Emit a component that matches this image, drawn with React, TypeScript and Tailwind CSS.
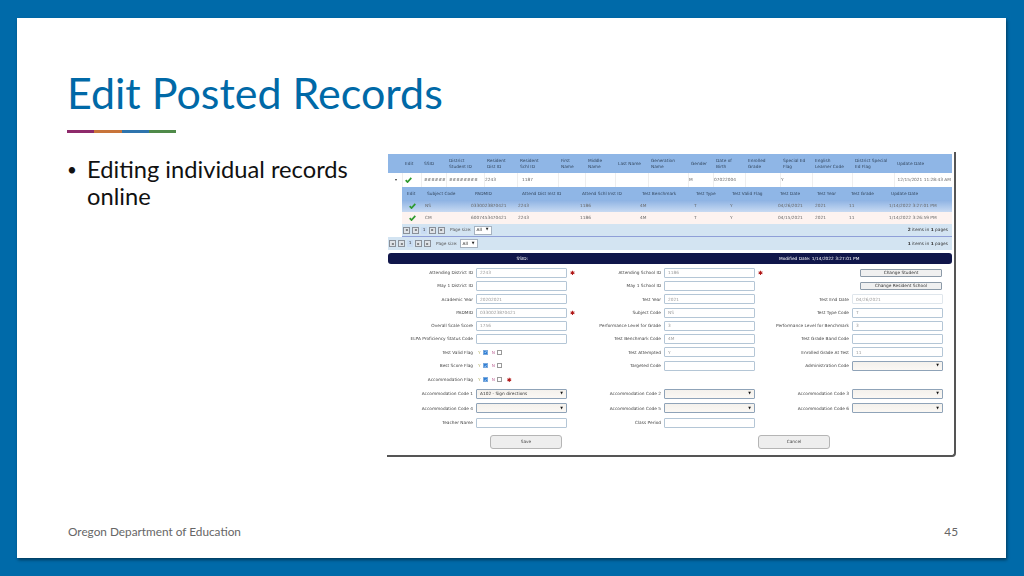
const OUTER = "grid grid-cols-[15px_19px_25px_38px_33px_41px_27px_30px_33px_40px_25px_32px_35px_32px_40px_42px_58px]";
const INNER = "grid grid-cols-[21px_46px_47px_62px_60px_54px_36px_48px_37px_34px_40px_66px]";

const outerHead = ["", "Edit", "SSID", "District\nStudent ID", "Resident\nDist ID", "Resident\nSchl ID", "First\nName", "Middle\nName", "Last Name", "Generation\nName", "Gender", "Date of\nBirth", "Enrolled\nGrade", "Special Ed\nFlag", "English\nLearner Code", "District Special\nEd Flag", "Update Date"];
const outerRow = ["", "", "######", "########", "2243", "1187", "", "", "", "", "M", "07022004", "", "Y", "", "", "12/15/2021 11:28:43 AM"];
const innerHead = ["Edit", "Subject Code", "PADMID", "Attend Dist Inst ID", "Attend Schl Inst ID", "Test Benchmark", "Test Type", "Test Valid Flag", "Test Date", "Test Year", "Test Grade", "Update Date"];
const innerRows = [
  ["", "NS", "0330023870421", "2243", "1186", "4M", "T", "Y", "04/26/2021", "2021", "11", "1/14/2022 3:27:01 PM"],
  ["", "CM", "6007453470421", "2243", "1186", "4M", "T", "Y", "04/15/2021", "2021", "11", "1/14/2022 3:26:59 PM"],
];

function Check() {
  return (
    <svg viewBox="0 0 10 8" className="w-[7px] h-[6px]">
      <path d="M1 4.2 L3.6 7 L9 1" fill="none" stroke="#2e9a2e" strokeWidth="2.4" />
    </svg>
  );
}

function Pager({ right, label }: { right: React.ReactNode; label: string }) {
  const btn = "w-[7px] h-[7px] bg-[#dfe3e8] border border-[#8a9099] flex items-center justify-center text-[4px] leading-none text-[#222]";
  return (
    <div className="flex items-center h-full pl-[1px] pr-[4px]">
      <div className="flex items-center gap-[2px]">
        <span className={btn}>◂</span>
        <span className={btn}>◂</span>
        <span className="w-[6px] h-[7px] bg-[#c9dcf3] text-center text-[#333]">1</span>
        <span className={btn}>▸</span>
        <span className={btn}>▸</span>
      </div>
      <span className="ml-[5px] text-[#555]">{label}</span>
      <span className="ml-[2px] w-[18px] h-[9px] bg-white border border-[#a6b2bf] flex items-center justify-between px-[2px] text-[#222]">
        All <span className="text-[3.5px]">▼</span>
      </span>
      <span className="ml-auto text-[#333]">{right}</span>
    </div>
  );
}

function Star() {
  return <span className="ml-[3px] text-[#b01515] text-[6px] leading-none font-bold">✱</span>;
}

function Input({ v, star, faint }: { v?: string; star?: boolean; faint?: boolean }) {
  return (
    <>
      <span className={`w-[91px] h-[10px] bg-white border rounded-[1px] pl-[3px] flex items-center text-[#9a9a9a] ${faint ? "border-[#dfe6ec]" : "border-[#b4c6d6]"}`}>
        {v}
      </span>
      {star && <Star />}
    </>
  );
}

function Select({ v }: { v?: string }) {
  return (
    <span className="w-[91px] h-[10px] bg-gradient-to-b from-[#f4f1ec] to-[#fbf8f4] border border-[#8fa3b8] rounded-[1px] pl-[3px] pr-[3px] flex items-center justify-between text-[#333]">
      <span>{v}</span>
      <span className="text-[3.5px] text-[#111]">▼</span>
    </span>
  );
}

function YesNo({ star }: { star?: boolean }) {
  return (
    <span className="flex items-center gap-[2px] text-[#8a8a8a]">
      <span className="text-[#b7b36a] ml-[2px]">Y</span>
      <span className="w-[5px] h-[5px] bg-[#2f7fd6] border border-[#7aa9dd] flex items-center justify-center">
        <svg viewBox="0 0 6 6" className="w-[4px] h-[4px]"><path d="M1 3 L2.5 4.6 L5 1.2" fill="none" stroke="#fff" strokeWidth="1" /></svg>
      </span>
      <span className="text-[#c06a9a] ml-[2px]">N</span>
      <span className="w-[5px] h-[5px] bg-white border border-[#999]" />
      {star && <Star />}
    </span>
  );
}

function Field({ label, children }: { label?: string; children?: React.ReactNode }) {
  return (
    <div className="flex items-center">
      <span className="w-[85px] text-right text-[#444] whitespace-nowrap">{label}</span>
      <span className="ml-[3px] flex items-center">{children}</span>
    </div>
  );
}

function Row({ h, children }: { h: string; children: React.ReactNode }) {
  return <div className={`grid grid-cols-[188px_188px_188px] ${h}`}>{children}</div>;
}

function SmallBtn({ children }: { children: string }) {
  return (
    <span className="ml-[8px] w-[82px] h-[8px] bg-[#f0f0f0] border border-[#8c9aa8] rounded-[1px] flex items-center justify-center text-[#333]">
      {children}
    </span>
  );
}

function outerCellPad(i: number) {
  if (i === 5) return "pl-[4px]";
  if (i === 4 || i === 10 || i === 11 || i === 13) return "pl-0";
  return "pl-[2px]";
}

function innerHeadPad(i: number) {
  if (i === 0) return "pl-[5px]";
  if (i === 2 || i === 3) return "pl-[6px]";
  return "pl-[4px]";
}

function Shot() {
  return (
    <div className="w-[569px] h-[305px] bg-white border-r-2 border-b-2 border-[#555] rounded-br-[4px] pt-[2px] pl-[1px] pr-[1px] text-[4.3px] leading-[5.4px] blur-[0.4px] [font-family:'DejaVu_Sans',sans-serif]">
      <div className="pr-[1px]">
        <div className={`${OUTER} h-[19px] bg-[#8fb6e6] text-[#33475f]`}>
          {outerHead.map((t, i) => (
            <div key={i} className="flex items-center pl-[2px] whitespace-pre">{t}</div>
          ))}
        </div>
        <div className={`${OUTER} h-[14px] bg-white text-[#666]`}>
          {outerRow.map((t, i) => (
            <div key={i} className={`flex items-center whitespace-nowrap border-r border-[#eeeeee] ${outerCellPad(i)} ${i === 16 ? "justify-end pr-[2px] border-r-0" : ""}`}>
              {i === 0 ? <span className="mx-auto text-[4px] text-[#333]">▾</span> : i === 1 ? <Check /> : t}
            </div>
          ))}
        </div>
        <div className="ml-[14px]">
          <div className={`${INNER} h-[13px] bg-[#8fb6e6] text-[#33475f]`}>
            {innerHead.map((t, i) => (
              <div key={i} className={`flex items-center whitespace-nowrap ${innerHeadPad(i)}`}>{t}</div>
            ))}
          </div>
          {innerRows.map((r, ri) => (
            <div key={ri} className={`${INNER} h-[12px] text-[#666] ${ri === 0 ? "bg-gradient-to-b from-[#8db2e3] to-[#c8daf2]" : "bg-[#fdf3f0]"}`}>
              {r.map((t, i) => (
                <div key={i} className={`flex items-center whitespace-nowrap ${i === 0 ? "pl-[7px]" : "pl-[2px]"}`}>{i === 0 ? <Check /> : t}</div>
              ))}
            </div>
          ))}
          <div className="h-[13px] bg-[#d3e4f2] border-b border-[#8f9fd8]">
            <Pager label="Page size:" right={<><b>2</b> items in <b>1</b> pages</>} />
          </div>
        </div>
        <div className="h-[13px] bg-[#d3e4f2]">
          <Pager label="Page size:" right={<><b>1</b> items in <b>1</b> pages</>} />
        </div>
      </div>
      <div className="mt-[3px] mr-[1px] h-[11px] bg-[#10164a] rounded-[3px] text-white flex items-center">
        <span className="w-[140px] text-right">SSID:</span>
        <span className="ml-[251px]">Modified Date: 1/14/2022 3:27:01 PM</span>
      </div>

      <div className="mt-[2px]">
        <Row h="h-[13.3px]"><Field label="Attending District ID"><Input v="2243" star /></Field><Field label="Attending School ID"><Input v="1186" star /></Field><Field><SmallBtn>Change Student</SmallBtn></Field></Row>
        <Row h="h-[13.3px]"><Field label="May 1 District ID"><Input /></Field><Field label="May 1 School ID"><Input /></Field><Field><SmallBtn>Change Resident School</SmallBtn></Field></Row>
        <Row h="h-[13.3px]"><Field label="Academic Year"><Input v="20202021" /></Field><Field label="Test Year"><Input v="2021" /></Field><Field label="Test End Date"><Input v="04/26/2021" faint /></Field></Row>
        <Row h="h-[13.3px]"><Field label="PADMID"><Input v="0330023870421" star /></Field><Field label="Subject Code"><Input v="NS" /></Field><Field label="Test Type Code"><Input v="T" /></Field></Row>
        <Row h="h-[13.3px]"><Field label="Overall Scale Score"><Input v="1756" /></Field><Field label="Performance Level for Grade"><Input v="3" /></Field><Field label="Performance Level for Benchmark"><Input v="3" /></Field></Row>
        <Row h="h-[13.3px]"><Field label="ELPA Proficiency Status Code"><Input /></Field><Field label="Test Benchmark Code"><Input v="4M" /></Field><Field label="Test Grade Band Code"><Input /></Field></Row>
        <Row h="h-[13.3px]"><Field label="Test Valid Flag"><YesNo /></Field><Field label="Test Attempted"><Input v="Y" /></Field><Field label="Enrolled Grade At Test"><Input v="11" /></Field></Row>
        <Row h="h-[13.6px]"><Field label="Best Score Flag"><YesNo /></Field><Field label="Targeted Code"><Input /></Field><Field label="Administration Code"><Select /></Field></Row>
        <Row h="h-[14px]"><Field label="Accommodation Flag"><YesNo star /></Field><div /><div /></Row>
        <Row h="h-[14.5px]"><Field label="Accommodation Code 1"><Select v="A102 - Sign directions" /></Field><Field label="Accommodation Code 2"><Select /></Field><Field label="Accommodation Code 3"><Select /></Field></Row>
        <Row h="h-[14.5px]"><Field label="Accommodation Code 4"><Select /></Field><Field label="Accommodation Code 5"><Select /></Field><Field label="Accommodation Code 6"><Select /></Field></Row>
        <Row h="h-[14.5px]"><Field label="Teacher Name"><Input /></Field><Field label="Class Period"><Input /></Field><div /></Row>
      </div>
      <div className="mt-[5px] flex">
        <span className="ml-[102px] w-[72px] h-[14px] bg-[#eeeeee] border border-[#b5b5b5] rounded-[3px] flex items-center justify-center text-[#444]">Save</span>
        <span className="ml-[196px] w-[72px] h-[14px] bg-[#eeeeee] border border-[#b5b5b5] rounded-[3px] flex items-center justify-center text-[#444]">Cancel</span>
      </div>
    </div>
  );
}

export default function App() {
  return (
    <div className="w-[1024px] h-[576px] bg-[#006aa9] pt-[18px] pl-[17px] overflow-hidden [font-family:Lato,sans-serif]">
      <div className="w-[989px] h-[540px] bg-white shadow-[1px_2px_3px_rgba(0,0,0,0.45)] flex flex-col">
        <div className="pl-[51px] pt-[47px]">
          <h1 className="text-[43px] leading-[56px] -ml-[1px] text-[#0069a7] whitespace-nowrap">Edit Posted Records</h1>
          <div className="mt-[9px] -ml-[1px] flex w-[109px] h-[3px]">
            <span className="flex-1 bg-[#8e2a6b]" />
            <span className="flex-1 bg-[#c8743a]" />
            <span className="flex-1 bg-[#2e74ad]" />
            <span className="flex-1 bg-[#4f8a49]" />
          </div>
        </div>
        <div className="flex mt-[19px] pl-[50px]">
          <div className="w-[320px] pt-[4px] flex text-[23.7px] leading-[27px] text-[#111]">
            <span className="w-[20px] text-[17px]">•</span>
            <span className="w-[280px]">Editing individual records online</span>
          </div>
          <Shot />
        </div>
        <div className="mt-auto mb-[18px] pl-[51px] pr-[48px] flex justify-between text-[11.8px] leading-[16px] text-[#666]">
          <span>Oregon Department of Education</span>
          <span>45</span>
        </div>
      </div>
    </div>
  );
}
